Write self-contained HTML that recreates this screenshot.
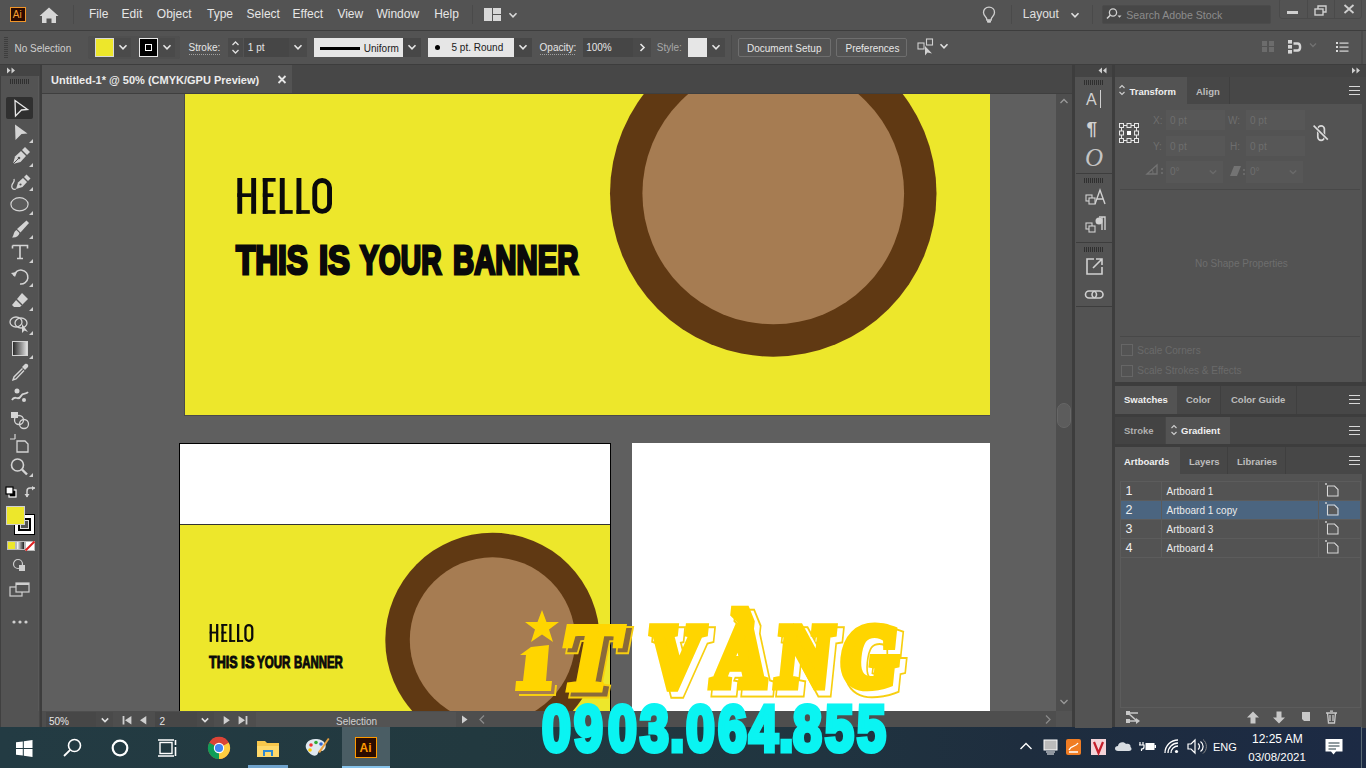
<!DOCTYPE html>
<html><head><meta charset="utf-8">
<style>
*{margin:0;padding:0;box-sizing:border-box}
html,body{width:1366px;height:768px;overflow:hidden;background:#535353;font-family:"Liberation Sans",sans-serif;color:#ddd;position:relative}
.a{position:absolute}
.t{position:absolute;white-space:nowrap;line-height:1}
svg{position:absolute;overflow:visible}
</style></head><body>
<div class="a" style="left:0px;top:0px;width:1366px;height:30px;background:#535353;"></div>
<div class="a" style="left:0px;top:30px;width:1366px;height:1px;background:#3d3d3d;"></div>
<div class="a" style="left:0px;top:31px;width:1366px;height:33px;background:#535353;"></div>
<div class="a" style="left:0px;top:64px;width:1366px;height:1px;background:#3d3d3d;"></div>
<div class="a" style="left:0px;top:65px;width:40px;height:663px;background:#535353;"></div>
<div class="a" style="left:0px;top:65px;width:40px;height:11px;background:#444444;"></div>
<div class="a" style="left:40px;top:65px;width:2px;height:663px;background:#3d3d3d;"></div>
<div class="a" style="left:0px;top:76px;width:1px;height:651px;background:#404040;"></div>
<div class="a" style="left:38px;top:76px;width:1px;height:635px;background:#595959;"></div>
<div class="a" style="left:39px;top:76px;width:1px;height:651px;background:#474747;"></div>
<div class="a" style="left:42px;top:65px;width:1030px;height:29px;background:#474747;"></div>
<div class="a" style="left:42px;top:65px;width:250px;height:28px;background:#535353;"></div>
<div class="a" style="left:42px;top:93px;width:1030px;height:1px;background:#3f3f3f;"></div>
<div class="a" style="left:42px;top:94px;width:1014px;height:617px;background:#5f5f5f;overflow:hidden">
 <div class="a" style="left:142px;top:-10px;width:806px;height:332px;background:#4a4a4a"></div>
 <div class="a" style="left:143px;top:-10px;width:805px;height:331px;background:#ede72b"></div>
 <svg style="left:0;top:0" width="1014" height="617">
  <circle cx="731.25" cy="99.5" r="163.25" fill="#603913"/>
  <circle cx="731.25" cy="99.5" r="130.85" fill="#a67c52"/>
 </svg>
 <div class="a" style="left:137px;top:349px;width:432px;height:300px;background:#000"></div>
 <div class="a" style="left:138px;top:350px;width:430px;height:300px;background:#fff"></div>
 <div class="a" style="left:138px;top:430px;width:430px;height:1px;background:#333"></div>
 <div class="a" style="left:138px;top:431px;width:430px;height:200px;background:#ede72b;overflow:hidden">
  <svg style="left:0;top:0" width="430" height="200">
   <circle cx="312.5" cy="115" r="107.2" fill="#603913"/>
   <circle cx="312.5" cy="115" r="82.7" fill="#a67c52"/>
  </svg>
 </div>
 <div class="a" style="left:590px;top:349px;width:358px;height:300px;background:#fff"></div>
</div>
<svg style="left:0;top:0" width="1366" height="768"><g fill="#0a0a0a"><rect x="237.30" y="178.00" width="4.90" height="35.80"/><rect x="251.20" y="178.00" width="4.90" height="35.80"/><rect x="237.30" y="193.30" width="14.20" height="3.70"/><rect x="262.80" y="178.00" width="4.90" height="35.80"/><rect x="262.80" y="178.00" width="12.80" height="3.70"/><rect x="262.80" y="193.30" width="10.60" height="3.70"/><rect x="262.80" y="210.10" width="12.80" height="3.70"/><rect x="279.80" y="178.00" width="4.90" height="35.80"/><rect x="279.80" y="210.10" width="12.90" height="3.70"/><rect x="296.50" y="178.00" width="4.90" height="35.80"/><rect x="296.50" y="210.10" width="13.30" height="3.70"/></g><rect x="314.75" y="180.45" width="14.80" height="30.90" rx="7.40" fill="none" stroke="#0a0a0a" stroke-width="4.90"/><g fill="#0a0a0a"><rect x="209.64" y="624.00" width="2.26" height="17.90"/><rect x="216.06" y="624.00" width="2.26" height="17.90"/><rect x="209.64" y="631.65" width="6.56" height="1.85"/><rect x="221.42" y="624.00" width="2.26" height="17.90"/><rect x="221.42" y="624.00" width="5.91" height="1.85"/><rect x="221.42" y="631.65" width="4.90" height="1.85"/><rect x="221.42" y="640.05" width="5.91" height="1.85"/><rect x="229.27" y="624.00" width="2.26" height="17.90"/><rect x="229.27" y="640.05" width="5.96" height="1.85"/><rect x="236.99" y="624.00" width="2.26" height="17.90"/><rect x="236.99" y="640.05" width="6.14" height="1.85"/></g><rect x="245.42" y="625.13" width="6.84" height="15.64" rx="3.42" fill="none" stroke="#0a0a0a" stroke-width="2.26"/></svg>
<div class="t" style="left:236.30px;top:239.3px;font-size:41.5px;font-weight:bold;color:#0a0a0a;transform:scaleX(0.76);transform-origin:0 0;-webkit-text-stroke:3px #0a0a0a">THIS</div>
<div class="t" style="left:318.92px;top:239.3px;font-size:41.5px;font-weight:bold;color:#0a0a0a;transform:scaleX(0.79);transform-origin:0 0;-webkit-text-stroke:3px #0a0a0a">IS</div>
<div class="t" style="left:360.08px;top:239.3px;font-size:41.5px;font-weight:bold;color:#0a0a0a;transform:scaleX(0.68);transform-origin:0 0;-webkit-text-stroke:3px #0a0a0a">YOUR</div>
<div class="t" style="left:453.39px;top:239.3px;font-size:41.5px;font-weight:bold;color:#0a0a0a;transform:scaleX(0.706);transform-origin:0 0;-webkit-text-stroke:3px #0a0a0a">BANNER</div>
<div class="t" style="left:209.20px;top:653.6px;font-size:16.5px;font-weight:bold;color:#0a0a0a;transform:scaleX(0.76);transform-origin:0 0;-webkit-text-stroke:1px #0a0a0a">THIS</div>
<div class="t" style="left:240.73px;top:653.6px;font-size:16.5px;font-weight:bold;color:#0a0a0a;transform:scaleX(0.87);transform-origin:0 0;-webkit-text-stroke:1px #0a0a0a">IS</div>
<div class="t" style="left:257.20px;top:653.6px;font-size:16.5px;font-weight:bold;color:#0a0a0a;transform:scaleX(0.7);transform-origin:0 0;-webkit-text-stroke:1px #0a0a0a">YOUR</div>
<div class="t" style="left:294.01px;top:653.6px;font-size:16.5px;font-weight:bold;color:#0a0a0a;transform:scaleX(0.69);transform-origin:0 0;-webkit-text-stroke:1px #0a0a0a">BANNER</div>
<div class="a" style="left:1056px;top:94px;width:16px;height:617px;background:#4e4e4e;"></div>
<div class="a" style="left:1072px;top:65px;width:3px;height:663px;background:#3d3d3d;"></div>
<div class="a" style="left:1075px;top:65px;width:37px;height:12px;background:#444444;"></div>
<div class="a" style="left:1075px;top:77px;width:37px;height:651px;background:#535353;"></div>
<div class="a" style="left:1112px;top:65px;width:3px;height:663px;background:#3d3d3d;"></div>
<div class="a" style="left:1115px;top:65px;width:251px;height:12px;background:#444444;"></div>
<div class="a" style="left:1115px;top:77px;width:251px;height:651px;background:#535353;"></div>
<div class="a" style="left:42px;top:711px;width:1030px;height:17px;background:#535353;"></div>
<div class="a" style="left:0px;top:727px;width:1366px;height:41px;background:#223940;background:linear-gradient(90deg,#233b43 0%,#22393f 35%,#203440 60%,#1e2d3e 75%,#1c2a44 100%)"></div>
<div class="a" style="left:10px;top:7px;width:16px;height:15px;background:#2a0a00;border:1px solid #f0962a"></div>
<div class="t" style="left:12.8px;top:10.04px;font-size:10px;color:#f7a030;font-weight:normal;font-family:'Liberation Sans',sans-serif;">Ai</div>
<svg style="left:38px;top:6px;" width="22" height="18" viewBox="0 0 22 18"><path d="M11 1.5 L20.5 10 L18 10 L18 17 L13.5 17 L13.5 12.5 L8.5 12.5 L8.5 17 L4 17 L4 10 L1.5 10 Z" fill="#d6d6d6"/></svg>
<div class="a" style="left:73px;top:5px;width:1px;height:19px;background:#4a4a4a;"></div>
<div class="t" style="left:89px;top:8.04px;font-size:12px;color:#e6e6e6;font-weight:normal;font-family:'Liberation Sans',sans-serif;">File</div>
<div class="t" style="left:121.6px;top:8.04px;font-size:12px;color:#e6e6e6;font-weight:normal;font-family:'Liberation Sans',sans-serif;">Edit</div>
<div class="t" style="left:156.8px;top:8.04px;font-size:12px;color:#e6e6e6;font-weight:normal;font-family:'Liberation Sans',sans-serif;">Object</div>
<div class="t" style="left:207px;top:8.04px;font-size:12px;color:#e6e6e6;font-weight:normal;font-family:'Liberation Sans',sans-serif;">Type</div>
<div class="t" style="left:246.6px;top:8.04px;font-size:12px;color:#e6e6e6;font-weight:normal;font-family:'Liberation Sans',sans-serif;">Select</div>
<div class="t" style="left:292.6px;top:8.04px;font-size:12px;color:#e6e6e6;font-weight:normal;font-family:'Liberation Sans',sans-serif;">Effect</div>
<div class="t" style="left:337.4px;top:8.04px;font-size:12px;color:#e6e6e6;font-weight:normal;font-family:'Liberation Sans',sans-serif;">View</div>
<div class="t" style="left:376.4px;top:8.04px;font-size:12px;color:#e6e6e6;font-weight:normal;font-family:'Liberation Sans',sans-serif;">Window</div>
<div class="t" style="left:434.2px;top:8.04px;font-size:12px;color:#e6e6e6;font-weight:normal;font-family:'Liberation Sans',sans-serif;">Help</div>
<div class="a" style="left:472px;top:5px;width:1px;height:19px;background:#4a4a4a;"></div>
<svg style="left:484px;top:8px;" width="17" height="13" viewBox="0 0 17 13"><rect x="0" y="0" width="8" height="13" fill="#d8d8d8"/><rect x="9" y="0" width="8" height="6" fill="#d8d8d8"/><rect x="9" y="7" width="8" height="6" fill="#d8d8d8"/></svg>
<svg style="left:505px;top:7px;" width="16" height="16" viewBox="0 0 16 16"><path d="M4.5 6.25 L8 9.75 L11.5 6.25" fill="none" stroke="#d8d8d8" stroke-width="1.6"/></svg>
<svg style="left:982px;top:6px;" width="14" height="18" viewBox="0 0 14 18"><path d="M7 1.2 C3.6 1.2 1.5 3.6 1.5 6.4 C1.5 9 3.5 10.4 4.6 12.4 L4.8 14 L9.2 14 L9.4 12.4 C10.5 10.4 12.5 9 12.5 6.4 C12.5 3.6 10.4 1.2 7 1.2 Z" fill="none" stroke="#d0d0d0" stroke-width="1.3"/><rect x="5" y="14.3" width="4" height="2.5" rx="1" fill="#d0d0d0"/></svg>
<div class="a" style="left:1011px;top:5px;width:1px;height:19px;background:#4a4a4a;"></div>
<div class="t" style="left:1022.8px;top:7.94px;font-size:12px;color:#e0e0e0;font-weight:normal;font-family:'Liberation Sans',sans-serif;">Layout</div>
<svg style="left:1066.5px;top:7px;" width="16" height="16" viewBox="0 0 16 16"><path d="M4.5 6.25 L8 9.75 L11.5 6.25" fill="none" stroke="#e0e0e0" stroke-width="1.6"/></svg>
<div class="a" style="left:1092px;top:5px;width:1px;height:19px;background:#4a4a4a;"></div>
<div class="a" style="left:1102px;top:5px;width:169px;height:19px;background:#474747;border:1px solid #4b4b4b;border-radius:2px"></div>
<svg style="left:1105px;top:7px;" width="18" height="15" viewBox="0 0 18 15"><circle cx="8" cy="5.5" r="3.6" fill="none" stroke="#d0d0d0" stroke-width="1.3"/><path d="M5.5 8 L2 11.6" stroke="#d0d0d0" stroke-width="1.5"/><path d="M12.5 8.5 L16.5 8.5 L14.5 10.7 Z" fill="#d0d0d0"/></svg>
<div class="t" style="left:1126.3px;top:9.83px;font-size:10.6px;color:#8c8c8c;font-weight:normal;font-family:'Liberation Sans',sans-serif;">Search Adobe Stock</div>
<div class="a" style="left:1279px;top:-2px;width:83px;height:21px;background:#535353;border:1px solid #4a4a4a;border-radius:3px"></div>
<div class="a" style="left:1307px;top:0px;width:1px;height:18px;background:#4a4a4a;"></div>
<div class="a" style="left:1334px;top:0px;width:1px;height:18px;background:#4a4a4a;"></div>
<div class="a" style="left:1287px;top:11px;width:11px;height:3px;background:#cfcfcf;"></div>
<svg style="left:1314px;top:5px;" width="14" height="11" viewBox="0 0 14 11"><rect x="1" y="4" width="8" height="6" fill="none" stroke="#cfcfcf" stroke-width="1.4"/><path d="M4 4 L4 1 L12 1 L12 7 L9 7" fill="none" stroke="#cfcfcf" stroke-width="1.4"/></svg>
<svg style="left:1343px;top:4px;" width="12" height="10" viewBox="0 0 12 10"><path d="M1.5 1 L10.5 9 M10.5 1 L1.5 9" stroke="#cfcfcf" stroke-width="1.8"/></svg>
<div class="a" style="left:4px;top:37px;width:4px;height:1px;background:#3e3e3e;"></div>
<div class="a" style="left:4px;top:39px;width:4px;height:1px;background:#3e3e3e;"></div>
<div class="a" style="left:4px;top:41px;width:4px;height:1px;background:#3e3e3e;"></div>
<div class="a" style="left:4px;top:43px;width:4px;height:1px;background:#3e3e3e;"></div>
<div class="a" style="left:4px;top:45px;width:4px;height:1px;background:#3e3e3e;"></div>
<div class="a" style="left:4px;top:47px;width:4px;height:1px;background:#3e3e3e;"></div>
<div class="a" style="left:4px;top:49px;width:4px;height:1px;background:#3e3e3e;"></div>
<div class="a" style="left:4px;top:51px;width:4px;height:1px;background:#3e3e3e;"></div>
<div class="a" style="left:4px;top:53px;width:4px;height:1px;background:#3e3e3e;"></div>
<div class="a" style="left:4px;top:55px;width:4px;height:1px;background:#3e3e3e;"></div>
<div class="a" style="left:4px;top:57px;width:4px;height:1px;background:#3e3e3e;"></div>
<div class="t" style="left:14.5px;top:43.83px;font-size:10px;color:#cfcfcf;font-weight:normal;font-family:'Liberation Sans',sans-serif;">No Selection</div>
<div class="a" style="left:88px;top:36px;width:92px;height:23px;background:#4f4f4f;border-radius:2px"></div>
<div class="a" style="left:95px;top:38px;width:19px;height:19px;background:#ede72b;border:1px solid #d8d8d8;"></div>
<div class="a" style="left:114px;top:38px;width:17px;height:19px;background:#4a4a4a;"></div>
<svg style="left:114.5px;top:39px;" width="16" height="16" viewBox="0 0 16 16"><path d="M4.5 6.25 L8 9.75 L11.5 6.25" fill="none" stroke="#e6e6e6" stroke-width="1.6"/></svg>
<div class="a" style="left:139px;top:38px;width:19px;height:19px;background:#000;border:1px solid #e8e8e8;"></div>
<div class="a" style="left:145px;top:44px;width:7px;height:7px;background:#000;border:1.5px solid #fff;"></div>
<div class="a" style="left:158px;top:38px;width:17px;height:19px;background:#4a4a4a;"></div>
<svg style="left:158.5px;top:39px;" width="16" height="16" viewBox="0 0 16 16"><path d="M4.5 6.25 L8 9.75 L11.5 6.25" fill="none" stroke="#e6e6e6" stroke-width="1.6"/></svg>
<div class="t" style="left:188.6px;top:43.23px;font-size:10px;color:#e6e6e6;font-weight:normal;font-family:'Liberation Sans',sans-serif;">Stroke:</div>
<div class="a" style="left:189px;top:54px;width:31px;height:1px;background:#9a9a9a;background:repeating-linear-gradient(90deg,#a0a0a0 0 1px,transparent 1px 2px)"></div>
<div class="a" style="left:228px;top:38px;width:15px;height:19px;background:#4a4a4a;"></div>
<svg style="left:228px;top:38px;" width="15" height="19" viewBox="0 0 15 19"><path d="M4.5 7 L7.5 4 L10.5 7 M4.5 12 L7.5 15 L10.5 12" fill="none" stroke="#e0e0e0" stroke-width="1.3"/></svg>
<div class="a" style="left:244px;top:38px;width:45px;height:19px;background:#464646;"></div>
<div class="t" style="left:247.8px;top:42.73px;font-size:10px;color:#e6e6e6;font-weight:normal;font-family:'Liberation Sans',sans-serif;">1 pt</div>
<div class="a" style="left:289px;top:38px;width:18px;height:19px;background:#4a4a4a;"></div>
<svg style="left:290px;top:39px;" width="16" height="16" viewBox="0 0 16 16"><path d="M4.5 6.25 L8 9.75 L11.5 6.25" fill="none" stroke="#e6e6e6" stroke-width="1.6"/></svg>
<div class="a" style="left:314px;top:38px;width:89px;height:19px;background:#e6e6e6;"></div>
<div class="a" style="left:320px;top:47px;width:40px;height:3px;background:#000;"></div>
<div class="t" style="left:363.8px;top:44.14px;font-size:10px;color:#1a1a1a;font-weight:normal;font-family:'Liberation Sans',sans-serif;">Uniform</div>
<div class="a" style="left:403px;top:38px;width:18px;height:19px;background:#474747;"></div>
<svg style="left:404px;top:39px;" width="16" height="16" viewBox="0 0 16 16"><path d="M4.5 6.25 L8 9.75 L11.5 6.25" fill="none" stroke="#e6e6e6" stroke-width="1.6"/></svg>
<div class="a" style="left:428px;top:38px;width:86px;height:19px;background:#e6e6e6;"></div>
<div class="a" style="left:434.7px;top:45px;width:5px;height:5px;border-radius:50%;background:#000"></div>
<div class="t" style="left:451.5px;top:43.23px;font-size:10px;color:#1a1a1a;font-weight:normal;font-family:'Liberation Sans',sans-serif;">5 pt. Round</div>
<div class="a" style="left:514px;top:38px;width:18px;height:19px;background:#474747;"></div>
<svg style="left:515px;top:39px;" width="16" height="16" viewBox="0 0 16 16"><path d="M4.5 6.25 L8 9.75 L11.5 6.25" fill="none" stroke="#e6e6e6" stroke-width="1.6"/></svg>
<div class="t" style="left:539.6px;top:43.33px;font-size:10px;color:#e6e6e6;font-weight:normal;font-family:'Liberation Sans',sans-serif;">Opacity:</div>
<div class="a" style="left:540px;top:54px;width:36px;height:1px;background:#9a9a9a;background:repeating-linear-gradient(90deg,#a0a0a0 0 1px,transparent 1px 2px)"></div>
<div class="a" style="left:583px;top:38px;width:50px;height:19px;background:#464646;"></div>
<div class="t" style="left:586.2px;top:43.33px;font-size:10px;color:#e6e6e6;font-weight:normal;font-family:'Liberation Sans',sans-serif;">100%</div>
<div class="a" style="left:633px;top:38px;width:18px;height:19px;background:#4a4a4a;"></div>
<svg style="left:633px;top:38px;" width="18" height="19" viewBox="0 0 18 19"><path d="M7.5 6 L11 9.5 L7.5 13" fill="none" stroke="#e6e6e6" stroke-width="1.6"/></svg>
<div class="t" style="left:656.8px;top:43.33px;font-size:10px;color:#a8a8a8;font-weight:normal;font-family:'Liberation Sans',sans-serif;">Style:</div>
<div class="a" style="left:688px;top:38px;width:19px;height:19px;background:#e6e6e6;"></div>
<div class="a" style="left:707px;top:38px;width:18px;height:19px;background:#4a4a4a;"></div>
<svg style="left:708px;top:39px;" width="16" height="16" viewBox="0 0 16 16"><path d="M4.5 6.25 L8 9.75 L11.5 6.25" fill="none" stroke="#e6e6e6" stroke-width="1.6"/></svg>
<div class="a" style="left:731px;top:35px;width:1px;height:25px;background:#4a4a4a;"></div>
<div class="a" style="left:738px;top:38px;width:93px;height:19px;background:#535353;border:1px solid #6e6e6e;border-radius:2px"></div>
<div class="t" style="left:747px;top:43.53px;font-size:10px;color:#e6e6e6;font-weight:normal;font-family:'Liberation Sans',sans-serif;">Document Setup</div>
<div class="a" style="left:836px;top:38px;width:71px;height:19px;background:#535353;border:1px solid #6e6e6e;border-radius:2px"></div>
<div class="t" style="left:845.5px;top:43.53px;font-size:10px;color:#e6e6e6;font-weight:normal;font-family:'Liberation Sans',sans-serif;">Preferences</div>
<svg style="left:917px;top:38px;" width="18" height="18" viewBox="0 0 18 18"><rect x="1" y="5" width="6" height="6" fill="none" stroke="#d0d0d0" stroke-width="1.1"/><rect x="9.5" y="1" width="6" height="6" fill="none" stroke="#d0d0d0" stroke-width="1.1"/><path d="M8 8 L8 17.5 L10.5 14.5 L15 15.5 Z" fill="#d0d0d0"/></svg>
<svg style="left:935.5px;top:38px;" width="16" height="16" viewBox="0 0 16 16"><path d="M4.5 6.25 L8 9.75 L11.5 6.25" fill="none" stroke="#e0e0e0" stroke-width="1.6"/></svg>
<svg style="left:1261px;top:40px;" width="14" height="13" viewBox="0 0 14 13"><g fill="#6c6c6c"><rect x="1" y="1" width="5" height="5"/><rect x="8" y="1" width="5" height="5"/><rect x="1" y="7" width="5" height="5"/><rect x="8" y="7" width="5" height="5"/></g></svg>
<svg style="left:1287px;top:40px;" width="16" height="14" viewBox="0 0 16 14"><g fill="#d6d6d6"><rect x="1" y="0" width="4" height="3.6"/><rect x="1" y="5" width="4" height="3.6"/><rect x="1" y="10" width="4" height="3.6"/></g><path d="M6.5 3.5 L10.5 3.5 C14 3.5 14 10.5 10.5 10.5 L6.5 10.5" fill="none" stroke="#d6d6d6" stroke-width="2.4"/></svg>
<svg style="left:1305px;top:37px;" width="16" height="16" viewBox="0 0 16 16"><path d="M5 6.5 L8 9.5 L11 6.5" fill="none" stroke="#727272" stroke-width="1.3"/></svg>
<svg style="left:1336px;top:42px;" width="13" height="10" viewBox="0 0 13 10"><g fill="#dcdcdc"><rect x="0" y="0" width="2" height="2"/><rect x="0" y="4" width="2" height="2"/><rect x="0" y="8" width="2" height="2"/><rect x="3.5" y="0.5" width="9" height="1.2"/><rect x="3.5" y="4.5" width="9" height="1.2"/><rect x="3.5" y="8.5" width="9" height="1.2"/></g></svg>
<div class="a" style="left:1361px;top:31px;width:2px;height:33px;background:#4a4a4a;"></div>
<svg style="left:6px;top:66px;" width="10" height="9" viewBox="0 0 10 9"><path d="M1 1.5 L4.5 4.5 L1 7.5 Z M5.5 1.5 L9 4.5 L5.5 7.5 Z" fill="#cfcfcf"/></svg>
<div class="a" style="left:10px;top:79px;width:1px;height:5px;background:#2f2f2f;"></div>
<div class="a" style="left:12px;top:79px;width:1px;height:5px;background:#2f2f2f;"></div>
<div class="a" style="left:14px;top:79px;width:1px;height:5px;background:#2f2f2f;"></div>
<div class="a" style="left:16px;top:79px;width:1px;height:5px;background:#2f2f2f;"></div>
<div class="a" style="left:18px;top:79px;width:1px;height:5px;background:#2f2f2f;"></div>
<div class="a" style="left:20px;top:79px;width:1px;height:5px;background:#2f2f2f;"></div>
<div class="a" style="left:22px;top:79px;width:1px;height:5px;background:#2f2f2f;"></div>
<div class="a" style="left:24px;top:79px;width:1px;height:5px;background:#2f2f2f;"></div>
<div class="a" style="left:26px;top:79px;width:1px;height:5px;background:#2f2f2f;"></div>
<div class="a" style="left:28px;top:79px;width:1px;height:5px;background:#2f2f2f;"></div>
<div class="a" style="left:6px;top:97px;width:27px;height:22px;background:#303030;border-radius:2px"></div>
<svg style="left:13px;top:99px;" width="16" height="19" viewBox="0 0 16 19"><path d="M2 1.5 L14.5 10.5 L8.5 11 L2.5 17 Z" fill="#303030" stroke="#e8e8e8" stroke-width="1.3" stroke-linejoin="miter"/></svg>
<svg style="left:13px;top:123px;" width="16" height="19" viewBox="0 0 16 19"><path d="M2 1.5 L14.5 10.5 L8.5 11 L2.5 17 Z" fill="#d4d4d4"/></svg>
<svg style="left:29px;top:139px;" width="4" height="4" viewBox="0 0 4 4"><path d="M4 0 L4 4 L0 4 Z" fill="#cfcfcf"/></svg>
<svg style="left:11px;top:146px;" width="20" height="20" viewBox="0 0 20 20"><path d="M2 18 L4 10.5 L10 5 L15 10 L9.5 16 Z" fill="#d4d4d4"/><path d="M11 4 L14 1 L19 6 L16 9 Z" fill="#d4d4d4"/><path d="M2 18 L7.5 12.5" stroke="#535353" stroke-width="1"/><circle cx="8" cy="12" r="1.3" fill="#535353"/></svg>
<svg style="left:29px;top:163px;" width="4" height="4" viewBox="0 0 4 4"><path d="M4 0 L4 4 L0 4 Z" fill="#cfcfcf"/></svg>
<svg style="left:9px;top:170px;" width="22" height="22" viewBox="0 0 22 22"><path d="M7 19 L9 12.5 L14 8 L18 12 L13.5 17 Z" fill="#d4d4d4"/><path d="M15 7 L17.5 4.5 L21.5 8.5 L19 11 Z" fill="#d4d4d4"/><path d="M7 19 C4 20 2 18 3 15 C4 12 6 12 5 9" fill="none" stroke="#d4d4d4" stroke-width="1.3"/><circle cx="11.5" cy="14.5" r="1.1" fill="#535353"/></svg>
<svg style="left:29px;top:187px;" width="4" height="4" viewBox="0 0 4 4"><path d="M4 0 L4 4 L0 4 Z" fill="#cfcfcf"/></svg>
<svg style="left:9px;top:196px;" width="22" height="17" viewBox="0 0 22 17"><ellipse cx="10.5" cy="8.3" rx="8.6" ry="6.6" fill="#5c5c5c" stroke="#d4d4d4" stroke-width="1.2"/></svg>
<svg style="left:29px;top:211px;" width="4" height="4" viewBox="0 0 4 4"><path d="M4 0 L4 4 L0 4 Z" fill="#cfcfcf"/></svg>
<svg style="left:10px;top:219px;" width="20" height="20" viewBox="0 0 20 20"><path d="M16.5 1.5 L19 4 L10.5 13.5 L7 10 Z" fill="#d4d4d4"/><path d="M6.5 11 L9.5 14 C9 17 6 19 2 18.5 C4 16.5 3.5 12.5 6.5 11 Z" fill="#d4d4d4"/></svg>
<svg style="left:29px;top:235px;" width="4" height="4" viewBox="0 0 4 4"><path d="M4 0 L4 4 L0 4 Z" fill="#cfcfcf"/></svg>
<svg style="left:11px;top:244px;" width="18" height="16" viewBox="0 0 18 16"><path d="M1.5 1.5 L16.5 1.5 L16.5 4.5 M1.5 1.5 L1.5 4.5 M9 1.5 L9 14.5 M6 14.5 L12 14.5" fill="none" stroke="#d4d4d4" stroke-width="1.6"/></svg>
<svg style="left:29px;top:259px;" width="4" height="4" viewBox="0 0 4 4"><path d="M4 0 L4 4 L0 4 Z" fill="#cfcfcf"/></svg>
<svg style="left:9px;top:267px;" width="22" height="20" viewBox="0 0 22 20"><path d="M5 9 A7 7 0 1 1 11 17" fill="none" stroke="#d4d4d4" stroke-width="1.5" stroke-dasharray="0"/><path d="M2 6 L6 10 L8 5 Z" fill="#d4d4d4"/></svg>
<svg style="left:29px;top:283px;" width="4" height="4" viewBox="0 0 4 4"><path d="M4 0 L4 4 L0 4 Z" fill="#cfcfcf"/></svg>
<svg style="left:10px;top:291px;" width="20" height="18" viewBox="0 0 20 18"><path d="M12 2 L18 8 L10 16 L4 16 L2 14 Z" fill="#d4d4d4"/><path d="M6 8 L12 14" stroke="#535353" stroke-width="1.4"/></svg>
<svg style="left:29px;top:307px;" width="4" height="4" viewBox="0 0 4 4"><path d="M4 0 L4 4 L0 4 Z" fill="#cfcfcf"/></svg>
<svg style="left:9px;top:315px;" width="22" height="18" viewBox="0 0 22 18"><ellipse cx="7" cy="7" rx="6" ry="5" fill="none" stroke="#d4d4d4" stroke-width="1.3"/><ellipse cx="12" cy="8" rx="6" ry="5" fill="none" stroke="#d4d4d4" stroke-width="1.3"/><path d="M13 9 L13 18 L15.5 15.5 L19 17 Z" fill="#d4d4d4"/></svg>
<svg style="left:29px;top:331px;" width="4" height="4" viewBox="0 0 4 4"><path d="M4 0 L4 4 L0 4 Z" fill="#cfcfcf"/></svg>
<div class="a" style="left:12px;top:341px;width:16px;height:15px;border:1px solid #d4d4d4;background:linear-gradient(90deg,#2a2a2a,#e0e0e0)"></div>
<svg style="left:29px;top:355px;" width="4" height="4" viewBox="0 0 4 4"><path d="M4 0 L4 4 L0 4 Z" fill="#cfcfcf"/></svg>
<svg style="left:10px;top:362px;" width="20" height="20" viewBox="0 0 20 20"><path d="M15 2 C17 1 19 3 18 5 L15 8 L12 5 Z" fill="#d4d4d4"/><path d="M12.5 6.5 L4 15 L3 18 L6 17 L14 8.5" fill="none" stroke="#d4d4d4" stroke-width="1.4"/></svg>
<svg style="left:9px;top:386px;" width="22" height="18" viewBox="0 0 22 18"><path d="M3 14 C6 8 9 16 12 10 C14 6 17 9 19 6" fill="none" stroke="#d4d4d4" stroke-width="1.8"/><circle cx="8" cy="5" r="2.5" fill="#d4d4d4"/><circle cx="15" cy="14" r="2" fill="#d4d4d4"/></svg>
<svg style="left:9px;top:410px;" width="22" height="20" viewBox="0 0 22 20"><rect x="2" y="2" width="7" height="6" fill="#d4d4d4"/><circle cx="10" cy="10" r="4.5" fill="none" stroke="#d4d4d4" stroke-width="1.3"/><circle cx="15" cy="14" r="4.5" fill="none" stroke="#d4d4d4" stroke-width="1.3"/></svg>
<svg style="left:9px;top:433px;" width="22" height="20" viewBox="0 0 22 20"><path d="M6 1 L6 6 M1 6 L6 6" stroke="#d4d4d4" stroke-width="1.2"/><path d="M8 8 L16 8 L19 11 L19 19 L8 19 Z" fill="none" stroke="#d4d4d4" stroke-width="1.3"/></svg>
<svg style="left:9px;top:457px;" width="22" height="20" viewBox="0 0 22 20"><circle cx="8.5" cy="8" r="6" fill="none" stroke="#d4d4d4" stroke-width="1.6"/><path d="M13 12.5 L18 17.5" stroke="#d4d4d4" stroke-width="2.4"/></svg>
<svg style="left:29px;top:473px;" width="4" height="4" viewBox="0 0 4 4"><path d="M4 0 L4 4 L0 4 Z" fill="#cfcfcf"/></svg>
<svg style="left:5px;top:486px;" width="12" height="12" viewBox="0 0 12 12"><rect x="4" y="4" width="7" height="7" fill="#000" stroke="#fff" stroke-width="1.2"/><rect x="1" y="1" width="7" height="7" fill="#fff" stroke="#000" stroke-width="1.2"/></svg>
<svg style="left:24px;top:486px;" width="14" height="13" viewBox="0 0 14 13"><path d="M3 11 L3 5 C3 3 4 2 6 2 L11 2" fill="none" stroke="#d4d4d4" stroke-width="1.5"/><path d="M8 0 L11 2 L8 4.5 Z M0.5 8 L3 11.5 L5.5 8 Z" fill="#d4d4d4"/></svg>
<div class="a" style="left:15px;top:515px;width:19px;height:19px;background:#535353;border:3px solid #fff;outline:1px solid #000"></div>
<div class="a" style="left:18px;top:518px;width:13px;height:13px;background:#000;"></div>
<div class="a" style="left:20px;top:520px;width:9px;height:9px;background:#535353;border:1px solid #ddd"></div>
<div class="a" style="left:6px;top:506px;width:19px;height:19px;background:#ede72b;border:1px solid #cfcfcf;"></div>
<div class="a" style="left:7px;top:541px;width:9px;height:9px;background:#ede72b;border:1px solid #bbb"></div>
<div class="a" style="left:16px;top:541px;width:9px;height:9px;background:linear-gradient(90deg,#fff,#222);border:1px solid #bbb"></div>
<svg style="left:25px;top:541px;" width="10" height="10" viewBox="0 0 10 10"><rect x="0.5" y="0.5" width="9" height="9" fill="#fff" stroke="#bbb"/><path d="M0.5 9.5 L9.5 0.5" stroke="#e02020" stroke-width="2"/></svg>
<svg style="left:11px;top:558px;" width="18" height="16" viewBox="0 0 18 16"><circle cx="7" cy="6" r="4.5" fill="none" stroke="#cfcfcf" stroke-width="1.2"/><rect x="8" y="7" width="6" height="6" fill="#cfcfcf"/></svg>
<svg style="left:9px;top:581px;" width="22" height="17" viewBox="0 0 22 17"><rect x="1" y="6" width="12" height="9" fill="none" stroke="#cfcfcf" stroke-width="1.2"/><rect x="7" y="2" width="13" height="9" fill="#535353" stroke="#cfcfcf" stroke-width="1.2"/><rect x="7" y="2" width="13" height="2" fill="#cfcfcf"/></svg>
<svg style="left:10px;top:618px;" width="20" height="8" viewBox="0 0 20 8"><circle cx="4" cy="4" r="1.6" fill="#cfcfcf"/><circle cx="10" cy="4" r="1.6" fill="#cfcfcf"/><circle cx="16" cy="4" r="1.6" fill="#cfcfcf"/></svg>
<div class="t" style="left:51px;top:74.89px;font-size:11px;color:#ececec;font-weight:bold;font-family:'Liberation Sans',sans-serif;">Untitled-1* @ 50% (CMYK/GPU Preview)</div>
<svg style="left:277px;top:75px;" width="10" height="9" viewBox="0 0 10 9"><path d="M1.5 1 L8.5 8 M8.5 1 L1.5 8" stroke="#e6e6e6" stroke-width="1.8"/></svg>
<svg style="left:1056px;top:96px;" width="16" height="10" viewBox="0 0 16 10"><path d="M4.5 7 L8 3.5 L11.5 7" fill="none" stroke="#9a9a9a" stroke-width="1.3"/></svg>
<div class="a" style="left:1057px;top:403px;width:14px;height:25px;border-radius:7px;background:#5c5c5c;border:1px solid #666"></div>
<svg style="left:1056px;top:697px;" width="16" height="10" viewBox="0 0 16 10"><path d="M4.5 3 L8 6.5 L11.5 3" fill="none" stroke="#9a9a9a" stroke-width="1.3"/></svg>
<svg style="left:1098px;top:66px;" width="10" height="9" viewBox="0 0 10 9"><path d="M4 1.5 L0.5 4.5 L4 7.5 Z M8.5 1.5 L5 4.5 L8.5 7.5 Z" fill="#cfcfcf"/></svg>
<div class="a" style="left:1084px;top:80px;width:1px;height:5px;background:#2f2f2f;"></div>
<div class="a" style="left:1086px;top:80px;width:1px;height:5px;background:#2f2f2f;"></div>
<div class="a" style="left:1088px;top:80px;width:1px;height:5px;background:#2f2f2f;"></div>
<div class="a" style="left:1090px;top:80px;width:1px;height:5px;background:#2f2f2f;"></div>
<div class="a" style="left:1092px;top:80px;width:1px;height:5px;background:#2f2f2f;"></div>
<div class="a" style="left:1094px;top:80px;width:1px;height:5px;background:#2f2f2f;"></div>
<div class="a" style="left:1096px;top:80px;width:1px;height:5px;background:#2f2f2f;"></div>
<div class="a" style="left:1098px;top:80px;width:1px;height:5px;background:#2f2f2f;"></div>
<div class="a" style="left:1100px;top:80px;width:1px;height:5px;background:#2f2f2f;"></div>
<div class="a" style="left:1102px;top:80px;width:1px;height:5px;background:#2f2f2f;"></div>
<div class="t" style="left:1086px;top:92.46px;font-size:16px;color:#d0d0d0;font-weight:normal;font-family:'Liberation Sans',sans-serif;">A</div>
<div class="a" style="left:1100px;top:90px;width:1px;height:18px;background:#d0d0d0;"></div>
<div class="t" style="left:1086.5px;top:119.42px;font-size:19px;color:#d0d0d0;font-weight:bold;font-family:'Liberation Sans',sans-serif;">&#182;</div>
<div class="t" style="left:1085px;top:144.84px;font-size:25px;color:#c4c4c4;font-weight:normal;font-family:'Liberation Serif',serif;"><i>O</i></div>
<div class="a" style="left:1076px;top:173px;width:36px;height:1px;background:#3d3d3d;"></div>
<div class="a" style="left:1084px;top:178px;width:1px;height:5px;background:#2f2f2f;"></div>
<div class="a" style="left:1086px;top:178px;width:1px;height:5px;background:#2f2f2f;"></div>
<div class="a" style="left:1088px;top:178px;width:1px;height:5px;background:#2f2f2f;"></div>
<div class="a" style="left:1090px;top:178px;width:1px;height:5px;background:#2f2f2f;"></div>
<div class="a" style="left:1092px;top:178px;width:1px;height:5px;background:#2f2f2f;"></div>
<div class="a" style="left:1094px;top:178px;width:1px;height:5px;background:#2f2f2f;"></div>
<div class="a" style="left:1096px;top:178px;width:1px;height:5px;background:#2f2f2f;"></div>
<div class="a" style="left:1098px;top:178px;width:1px;height:5px;background:#2f2f2f;"></div>
<div class="a" style="left:1100px;top:178px;width:1px;height:5px;background:#2f2f2f;"></div>
<div class="a" style="left:1102px;top:178px;width:1px;height:5px;background:#2f2f2f;"></div>
<svg style="left:1085px;top:187px;" width="22" height="20" viewBox="0 0 22 20"><path d="M10 17 L15 3 L20 17 M12 12 L18 12" fill="none" stroke="#d0d0d0" stroke-width="1.4"/><rect x="1" y="8" width="6" height="6" fill="none" stroke="#d0d0d0" stroke-width="1.1"/><rect x="4" y="11" width="6" height="6" fill="#535353" stroke="#d0d0d0" stroke-width="1.1"/></svg>
<svg style="left:1085px;top:215px;" width="22" height="20" viewBox="0 0 22 20"><path d="M14 2 L20 2 L20 15 M17 2 L17 15" fill="none" stroke="#d0d0d0" stroke-width="1.4"/><circle cx="14" cy="6" r="3.5" fill="#d0d0d0"/><rect x="1" y="8" width="6" height="6" fill="none" stroke="#d0d0d0" stroke-width="1.1"/><rect x="4" y="11" width="6" height="6" fill="#535353" stroke="#d0d0d0" stroke-width="1.1"/></svg>
<div class="a" style="left:1076px;top:242px;width:36px;height:1px;background:#3d3d3d;"></div>
<div class="a" style="left:1084px;top:247px;width:1px;height:5px;background:#2f2f2f;"></div>
<div class="a" style="left:1086px;top:247px;width:1px;height:5px;background:#2f2f2f;"></div>
<div class="a" style="left:1088px;top:247px;width:1px;height:5px;background:#2f2f2f;"></div>
<div class="a" style="left:1090px;top:247px;width:1px;height:5px;background:#2f2f2f;"></div>
<div class="a" style="left:1092px;top:247px;width:1px;height:5px;background:#2f2f2f;"></div>
<div class="a" style="left:1094px;top:247px;width:1px;height:5px;background:#2f2f2f;"></div>
<div class="a" style="left:1096px;top:247px;width:1px;height:5px;background:#2f2f2f;"></div>
<div class="a" style="left:1098px;top:247px;width:1px;height:5px;background:#2f2f2f;"></div>
<div class="a" style="left:1100px;top:247px;width:1px;height:5px;background:#2f2f2f;"></div>
<div class="a" style="left:1102px;top:247px;width:1px;height:5px;background:#2f2f2f;"></div>
<svg style="left:1085px;top:256px;" width="20" height="20" viewBox="0 0 20 20"><path d="M9 3 L2 3 L2 18 L17 18 L17 11" fill="none" stroke="#d0d0d0" stroke-width="1.6"/><path d="M8 12 L17 3 M11 3 L17 3 L17 9" fill="none" stroke="#d0d0d0" stroke-width="1.6"/></svg>
<svg style="left:1084px;top:288px;" width="22" height="14" viewBox="0 0 22 14"><rect x="1.5" y="3" width="11" height="7" rx="3.5" fill="none" stroke="#d0d0d0" stroke-width="1.6"/><rect x="8" y="3" width="11" height="7" rx="3.5" fill="none" stroke="#d0d0d0" stroke-width="1.6"/></svg>
<div class="a" style="left:1076px;top:306px;width:36px;height:1px;background:#3d3d3d;"></div>
<div class="a" style="left:1075px;top:307px;width:37px;height:421px;background:#535353;"></div>
<svg style="left:1351px;top:66px;" width="10" height="9" viewBox="0 0 10 9"><path d="M1 1.5 L4.5 4.5 L1 7.5 Z M5.5 1.5 L9 4.5 L5.5 7.5 Z" fill="#cfcfcf"/></svg>
<div class="a" style="left:1115px;top:77px;width:247px;height:27px;background:#474747;"></div>
<div class="a" style="left:1115px;top:77px;width:72px;height:27px;background:#535353;"></div>
<div class="a" style="left:1229px;top:77px;width:1px;height:27px;background:#3f3f3f;"></div>
<svg style="left:1118px;top:83px;" width="8" height="14" viewBox="0 0 8 14"><path d="M1.5 5 L4 2.5 L6.5 5 M1.5 9 L4 11.5 L6.5 9" fill="none" stroke="#cfcfcf" stroke-width="1.1"/></svg>
<div class="t" style="left:1129.5px;top:86.66px;font-size:9.5px;color:#f0f0f0;font-weight:bold;font-family:'Liberation Sans',sans-serif;">Transform</div>
<div class="t" style="left:1196px;top:86.66px;font-size:9.5px;color:#bdbdbd;font-weight:bold;font-family:'Liberation Sans',sans-serif;">Align</div>
<div class="a" style="left:1349px;top:86px;width:11px;height:1.2px;background:#d8d8d8;"></div>
<div class="a" style="left:1349px;top:90px;width:11px;height:1.2px;background:#d8d8d8;"></div>
<div class="a" style="left:1349px;top:94px;width:11px;height:1.2px;background:#d8d8d8;"></div>
<div class="a" style="left:1362px;top:77px;width:4px;height:651px;background:#474747;"></div>
<svg style="left:1119px;top:123px;" width="21" height="21" viewBox="0 0 21 21"><g fill="none" stroke="#e6e6e6" stroke-width="1"><rect x="0.5" y="0.5" width="4" height="4"/><rect x="8" y="0.5" width="4" height="4"/><rect x="15.5" y="0.5" width="4" height="4"/><rect x="0.5" y="8" width="4" height="4"/><rect x="15.5" y="8" width="4" height="4"/><rect x="0.5" y="15.5" width="4" height="4"/><rect x="8" y="15.5" width="4" height="4"/><rect x="15.5" y="15.5" width="4" height="4"/><path d="M4.5 2.5 L8 2.5 M12 2.5 L15.5 2.5 M4.5 17.5 L8 17.5 M12 17.5 L15.5 17.5 M2.5 4.5 L2.5 8 M2.5 12 L2.5 15.5 M17.5 4.5 L17.5 8 M17.5 12 L17.5 15.5"/></g><rect x="8" y="8" width="4" height="4" fill="#fff"/></svg>
<div class="a" style="left:1166px;top:110px;width:59px;height:20px;background:#575757;"></div>
<div class="t" style="left:1153px;top:116.03px;font-size:10px;color:#6e6e6e;font-weight:normal;font-family:'Liberation Sans',sans-serif;">X:</div>
<div class="t" style="left:1170px;top:116.33px;font-size:10px;color:#6e6e6e;font-weight:normal;font-family:'Liberation Sans',sans-serif;">0 pt</div>
<div class="a" style="left:1246px;top:110px;width:59px;height:20px;background:#575757;"></div>
<div class="t" style="left:1228px;top:116.03px;font-size:10px;color:#6e6e6e;font-weight:normal;font-family:'Liberation Sans',sans-serif;">W:</div>
<div class="t" style="left:1250px;top:116.33px;font-size:10px;color:#6e6e6e;font-weight:normal;font-family:'Liberation Sans',sans-serif;">0 pt</div>
<div class="a" style="left:1166px;top:136px;width:59px;height:20px;background:#575757;"></div>
<div class="t" style="left:1153px;top:142.03px;font-size:10px;color:#6e6e6e;font-weight:normal;font-family:'Liberation Sans',sans-serif;">Y:</div>
<div class="t" style="left:1170px;top:142.34px;font-size:10px;color:#6e6e6e;font-weight:normal;font-family:'Liberation Sans',sans-serif;">0 pt</div>
<div class="a" style="left:1246px;top:136px;width:59px;height:20px;background:#575757;"></div>
<div class="t" style="left:1230px;top:142.03px;font-size:10px;color:#6e6e6e;font-weight:normal;font-family:'Liberation Sans',sans-serif;">H:</div>
<div class="t" style="left:1250px;top:142.34px;font-size:10px;color:#6e6e6e;font-weight:normal;font-family:'Liberation Sans',sans-serif;">0 pt</div>
<div class="a" style="left:1166px;top:161px;width:57px;height:22px;background:#575757;"></div>
<div class="t" style="left:1170px;top:167.34px;font-size:10px;color:#6e6e6e;font-weight:normal;font-family:'Liberation Sans',sans-serif;">0&#176;</div>
<svg style="left:1205px;top:164px;" width="16" height="16" viewBox="0 0 16 16"><path d="M4.8 6.4 L8 9.6 L11.2 6.4" fill="none" stroke="#6a6a6a" stroke-width="1.4"/></svg>
<div class="a" style="left:1246px;top:161px;width:57px;height:22px;background:#575757;"></div>
<div class="t" style="left:1250px;top:167.34px;font-size:10px;color:#6e6e6e;font-weight:normal;font-family:'Liberation Sans',sans-serif;">0&#176;</div>
<svg style="left:1285px;top:164px;" width="16" height="16" viewBox="0 0 16 16"><path d="M4.8 6.4 L8 9.6 L11.2 6.4" fill="none" stroke="#6a6a6a" stroke-width="1.4"/></svg>
<svg style="left:1146px;top:162px;" width="18" height="14" viewBox="0 0 18 14"><path d="M1 12 L11 3 L11 12 Z" fill="none" stroke="#737373" stroke-width="1.3"/><path d="M7 12 A5 5 0 0 0 5 7" fill="none" stroke="#737373" stroke-width="1"/><circle cx="16" cy="7" r="0.9" fill="#737373"/><circle cx="16" cy="11" r="0.9" fill="#737373"/></svg>
<svg style="left:1229px;top:165px;" width="18" height="12" viewBox="0 0 18 12"><path d="M1 11 L5 1 L12 1 L8 11 Z" fill="#737373"/><circle cx="15" cy="5" r="0.9" fill="#737373"/><circle cx="15" cy="9" r="0.9" fill="#737373"/></svg>
<svg style="left:1310px;top:120px;" width="22" height="24" viewBox="0 0 22 24"><rect x="7.8" y="5.8" width="6.6" height="14.6" rx="3.3" fill="none" stroke="#d8d8d8" stroke-width="1.7"/><path d="M3.6 5.6 L17.8 19.6" stroke="#535353" stroke-width="3.2"/><path d="M3.6 5.6 L17.8 19.6" stroke="#dcdcdc" stroke-width="1.6"/></svg>
<div class="a" style="left:1120px;top:189px;width:240px;height:1px;background:#484848;"></div>
<div class="t" style="left:1195px;top:258.84px;font-size:10px;color:#6e6e6e;font-weight:normal;font-family:'Liberation Sans',sans-serif;">No Shape Properties</div>
<div class="a" style="left:1120px;top:336px;width:240px;height:1px;background:#484848;"></div>
<div class="a" style="left:1121px;top:344px;width:12px;height:12px;background:#535353;border:1px solid #666;"></div>
<div class="t" style="left:1137.3px;top:345.54px;font-size:10px;color:#6a6a6a;font-weight:normal;font-family:'Liberation Sans',sans-serif;">Scale Corners</div>
<div class="a" style="left:1121px;top:365px;width:12px;height:12px;background:#535353;border:1px solid #666;"></div>
<div class="t" style="left:1137.3px;top:366.04px;font-size:10px;color:#6a6a6a;font-weight:normal;font-family:'Liberation Sans',sans-serif;">Scale Strokes &amp; Effects</div>
<div class="a" style="left:1115px;top:382px;width:251px;height:4px;background:#3d3d3d;"></div>
<div class="a" style="left:1115px;top:386px;width:247px;height:28px;background:#474747;"></div>
<div class="a" style="left:1115px;top:386px;width:62px;height:28px;background:#535353;"></div>
<div class="a" style="left:1220px;top:386px;width:1px;height:28px;background:#3f3f3f;"></div>
<div class="a" style="left:1296px;top:386px;width:1px;height:28px;background:#3f3f3f;"></div>
<div class="t" style="left:1124px;top:395.46px;font-size:9.5px;color:#f0f0f0;font-weight:bold;font-family:'Liberation Sans',sans-serif;">Swatches</div>
<div class="t" style="left:1186px;top:395.46px;font-size:9.5px;color:#bdbdbd;font-weight:bold;font-family:'Liberation Sans',sans-serif;">Color</div>
<div class="t" style="left:1231px;top:395.46px;font-size:9.5px;color:#bdbdbd;font-weight:bold;font-family:'Liberation Sans',sans-serif;">Color Guide</div>
<div class="a" style="left:1349px;top:395px;width:11px;height:1.2px;background:#d8d8d8;"></div>
<div class="a" style="left:1349px;top:399px;width:11px;height:1.2px;background:#d8d8d8;"></div>
<div class="a" style="left:1349px;top:403px;width:11px;height:1.2px;background:#d8d8d8;"></div>
<div class="a" style="left:1115px;top:414px;width:251px;height:3px;background:#3d3d3d;"></div>
<div class="a" style="left:1115px;top:417px;width:247px;height:27px;background:#474747;"></div>
<div class="a" style="left:1115px;top:417px;width:50px;height:27px;background:#434343;"></div>
<div class="a" style="left:1166px;top:417px;width:64px;height:27px;background:#535353;"></div>
<div class="t" style="left:1124px;top:426.46px;font-size:9.5px;color:#b0b0b0;font-weight:bold;font-family:'Liberation Sans',sans-serif;">Stroke</div>
<svg style="left:1170px;top:423px;" width="8" height="14" viewBox="0 0 8 14"><path d="M1.5 5 L4 2.5 L6.5 5 M1.5 9 L4 11.5 L6.5 9" fill="none" stroke="#cfcfcf" stroke-width="1.1"/></svg>
<div class="t" style="left:1181px;top:426.46px;font-size:9.5px;color:#f0f0f0;font-weight:bold;font-family:'Liberation Sans',sans-serif;">Gradient</div>
<div class="a" style="left:1349px;top:426px;width:11px;height:1.2px;background:#d8d8d8;"></div>
<div class="a" style="left:1349px;top:430px;width:11px;height:1.2px;background:#d8d8d8;"></div>
<div class="a" style="left:1349px;top:434px;width:11px;height:1.2px;background:#d8d8d8;"></div>
<div class="a" style="left:1115px;top:444px;width:251px;height:3px;background:#3d3d3d;"></div>
<div class="a" style="left:1115px;top:447px;width:247px;height:27px;background:#474747;"></div>
<div class="a" style="left:1115px;top:447px;width:65px;height:27px;background:#535353;"></div>
<div class="a" style="left:1227px;top:447px;width:1px;height:27px;background:#3f3f3f;"></div>
<div class="a" style="left:1285px;top:447px;width:1px;height:27px;background:#3f3f3f;"></div>
<div class="t" style="left:1124px;top:456.96px;font-size:9.5px;color:#f0f0f0;font-weight:bold;font-family:'Liberation Sans',sans-serif;">Artboards</div>
<div class="t" style="left:1189px;top:456.96px;font-size:9.5px;color:#bdbdbd;font-weight:bold;font-family:'Liberation Sans',sans-serif;">Layers</div>
<div class="t" style="left:1237px;top:456.96px;font-size:9.5px;color:#bdbdbd;font-weight:bold;font-family:'Liberation Sans',sans-serif;">Libraries</div>
<div class="a" style="left:1349px;top:456px;width:11px;height:1.2px;background:#d8d8d8;"></div>
<div class="a" style="left:1349px;top:460px;width:11px;height:1.2px;background:#d8d8d8;"></div>
<div class="a" style="left:1349px;top:464px;width:11px;height:1.2px;background:#d8d8d8;"></div>
<div class="a" style="left:1120px;top:481px;width:241px;height:227px;background:#535353;border:1px solid #5c5c5c;"></div>
<div class="a" style="left:1121px;top:500px;width:239px;height:1px;background:#5c5c5c;"></div>
<div class="t" style="left:1125.5px;top:484.72px;font-size:12.5px;color:#f0f0f0;font-weight:normal;font-family:'Liberation Sans',sans-serif;">1</div>
<div class="t" style="left:1166.6px;top:486.54px;font-size:10px;color:#ececec;font-weight:normal;font-family:'Liberation Sans',sans-serif;">Artboard 1</div>
<svg style="left:1325px;top:483px;" width="16" height="14" viewBox="0 0 16 14"><path d="M0 1 L2 1 M1 0 L1 2" stroke="#d0d0d0" stroke-width="0.9"/><path d="M2.5 3 L9.5 3 L13 6.5 L13 13 L2.5 13 Z" fill="none" stroke="#d8d8d8" stroke-width="1.1"/><path d="M3.5 4 L9 4 L12 7 L12 12 L3.5 12 Z" fill="#5a5a5a"/></svg>
<div class="a" style="left:1121px;top:501px;width:239px;height:18px;background:#4b6580;"></div>
<div class="a" style="left:1121px;top:519px;width:239px;height:1px;background:#5c5c5c;"></div>
<div class="t" style="left:1125.5px;top:503.72px;font-size:12.5px;color:#f0f0f0;font-weight:normal;font-family:'Liberation Sans',sans-serif;">2</div>
<div class="t" style="left:1166.6px;top:505.54px;font-size:10px;color:#ececec;font-weight:normal;font-family:'Liberation Sans',sans-serif;">Artboard 1 copy</div>
<svg style="left:1325px;top:502px;" width="16" height="14" viewBox="0 0 16 14"><path d="M0 1 L2 1 M1 0 L1 2" stroke="#d0d0d0" stroke-width="0.9"/><path d="M2.5 3 L9.5 3 L13 6.5 L13 13 L2.5 13 Z" fill="none" stroke="#d8d8d8" stroke-width="1.1"/><path d="M3.5 4 L9 4 L12 7 L12 12 L3.5 12 Z" fill="#5a5a5a"/></svg>
<div class="a" style="left:1121px;top:538px;width:239px;height:1px;background:#5c5c5c;"></div>
<div class="t" style="left:1125.5px;top:522.72px;font-size:12.5px;color:#f0f0f0;font-weight:normal;font-family:'Liberation Sans',sans-serif;">3</div>
<div class="t" style="left:1166.6px;top:524.53px;font-size:10px;color:#ececec;font-weight:normal;font-family:'Liberation Sans',sans-serif;">Artboard 3</div>
<svg style="left:1325px;top:521px;" width="16" height="14" viewBox="0 0 16 14"><path d="M0 1 L2 1 M1 0 L1 2" stroke="#d0d0d0" stroke-width="0.9"/><path d="M2.5 3 L9.5 3 L13 6.5 L13 13 L2.5 13 Z" fill="none" stroke="#d8d8d8" stroke-width="1.1"/><path d="M3.5 4 L9 4 L12 7 L12 12 L3.5 12 Z" fill="#5a5a5a"/></svg>
<div class="a" style="left:1121px;top:557px;width:239px;height:1px;background:#5c5c5c;"></div>
<div class="t" style="left:1125.5px;top:541.72px;font-size:12.5px;color:#f0f0f0;font-weight:normal;font-family:'Liberation Sans',sans-serif;">4</div>
<div class="t" style="left:1166.6px;top:543.53px;font-size:10px;color:#ececec;font-weight:normal;font-family:'Liberation Sans',sans-serif;">Artboard 4</div>
<svg style="left:1325px;top:540px;" width="16" height="14" viewBox="0 0 16 14"><path d="M0 1 L2 1 M1 0 L1 2" stroke="#d0d0d0" stroke-width="0.9"/><path d="M2.5 3 L9.5 3 L13 6.5 L13 13 L2.5 13 Z" fill="none" stroke="#d8d8d8" stroke-width="1.1"/><path d="M3.5 4 L9 4 L12 7 L12 12 L3.5 12 Z" fill="#5a5a5a"/></svg>
<div class="a" style="left:1161px;top:481px;width:1px;height:76px;background:#5c5c5c;"></div>
<div class="a" style="left:1318px;top:481px;width:1px;height:76px;background:#5c5c5c;"></div>
<svg style="left:1125px;top:710px;" width="16" height="14" viewBox="0 0 16 14"><path d="M2 3 L13 3 M2 11 L13 11 M3 3 L12 11" stroke="#c8c8c8" stroke-width="1.6"/><path d="M11 8 L15 11 L11 14 Z" fill="#c8c8c8"/><rect x="1" y="1" width="4" height="4" fill="#c8c8c8"/><rect x="1" y="9" width="4" height="4" fill="#c8c8c8"/></svg>
<svg style="left:1246px;top:711px;" width="14" height="13" viewBox="0 0 14 13"><path d="M7 0.5 L13 6.5 L9.5 6.5 L9.5 12.5 L4.5 12.5 L4.5 6.5 L1 6.5 Z" fill="#c8c8c8"/></svg>
<svg style="left:1272px;top:711px;" width="14" height="13" viewBox="0 0 14 13"><path d="M7 12.5 L13 6.5 L9.5 6.5 L9.5 0.5 L4.5 0.5 L4.5 6.5 L1 6.5 Z" fill="#c8c8c8"/></svg>
<svg style="left:1299px;top:711px;" width="12" height="12" viewBox="0 0 12 12"><path d="M3 1 L11 1 L11 10 L3 10 Z" fill="#c8c8c8"/><path d="M1 6 L5 10 L1 10 Z" fill="#535353"/></svg>
<svg style="left:1325px;top:710px;" width="13" height="14" viewBox="0 0 13 14"><path d="M1 3 L12 3 M5 1.2 L8 1.2 M2.5 3 L3.5 13 L9.5 13 L10.5 3 M5 5 L5 11 M8 5 L8 11" fill="none" stroke="#c8c8c8" stroke-width="1.3"/></svg>
<div class="a" style="left:42px;top:711px;width:1030px;height:16px;background:#4e4e4e;"></div>
<div class="a" style="left:46px;top:712px;width:50px;height:15px;background:#474747;"></div>
<div class="t" style="left:49px;top:716.83px;font-size:10px;color:#e6e6e6;font-weight:normal;font-family:'Liberation Sans',sans-serif;">50%</div>
<div class="a" style="left:96px;top:712px;width:17px;height:15px;background:#4a4a4a;"></div>
<svg style="left:96.5px;top:712px;" width="16" height="16" viewBox="0 0 16 16"><path d="M4.8 6.4 L8 9.6 L11.2 6.4" fill="none" stroke="#e0e0e0" stroke-width="1.5"/></svg>
<div class="a" style="left:114px;top:712px;width:41px;height:15px;background:#4e4e4e;"></div>
<svg style="left:120px;top:713px;" width="30" height="13" viewBox="0 0 30 13"><rect x="2.6" y="3" width="1.8" height="8.5" fill="#cfcfcf"/><path d="M11.4 3 L5 7.25 L11.4 11.5 Z M26.3 3 L20 7.25 L26.3 11.5 Z" fill="#cfcfcf"/></svg>
<div class="a" style="left:155px;top:712px;width:42px;height:15px;background:#474747;"></div>
<div class="t" style="left:159.5px;top:716.83px;font-size:10px;color:#e6e6e6;font-weight:normal;font-family:'Liberation Sans',sans-serif;">2</div>
<div class="a" style="left:197px;top:712px;width:17px;height:15px;background:#4a4a4a;"></div>
<svg style="left:197px;top:712px;" width="16" height="16" viewBox="0 0 16 16"><path d="M4.8 6.4 L8 9.6 L11.2 6.4" fill="none" stroke="#e0e0e0" stroke-width="1.5"/></svg>
<svg style="left:218px;top:713px;" width="36" height="13" viewBox="0 0 36 13"><path d="M5.7 3 L11.8 7.25 L5.7 11.5 Z M20.6 3 L27 7.25 L20.6 11.5 Z" fill="#cfcfcf"/><rect x="27.6" y="3" width="1.8" height="8.5" fill="#cfcfcf"/></svg>
<div class="a" style="left:256px;top:712px;width:200px;height:15px;background:#535353;"></div>
<div class="t" style="left:336px;top:716.83px;font-size:10px;color:#d0d0d0;font-weight:normal;font-family:'Liberation Sans',sans-serif;">Selection</div>
<svg style="left:459px;top:713px;" width="12" height="13" viewBox="0 0 12 13"><path d="M3 2.5 L8.5 6.5 L3 10.5 Z" fill="#cfcfcf"/></svg>
<div class="a" style="left:472px;top:712px;width:584px;height:15px;background:#4e4e4e;"></div>
<svg style="left:476px;top:713px;" width="12" height="13" viewBox="0 0 12 13"><path d="M8 2.5 L4 6.5 L8 10.5" fill="none" stroke="#8a8a8a" stroke-width="1.3"/></svg>
<svg style="left:1042px;top:713px;" width="12" height="13" viewBox="0 0 12 13"><path d="M4 2.5 L8 6.5 L4 10.5" fill="none" stroke="#8a8a8a" stroke-width="1.3"/></svg>
<div class="a" style="left:1056px;top:711px;width:16px;height:16px;background:#535353;"></div>
<svg style="left:16px;top:740px;" width="17" height="17" viewBox="0 0 17 17"><path d="M0 2.3 L6.8 1.4 L6.8 8 L0 8 Z M7.8 1.2 L16.5 0 L16.5 8 L7.8 8 Z M0 9 L6.8 9 L6.8 15.6 L0 14.7 Z M7.8 9 L16.5 9 L16.5 17 L7.8 15.8 Z" fill="#fff"/></svg>
<svg style="left:62px;top:737px;" width="22" height="22" viewBox="0 0 22 22"><circle cx="12.5" cy="8.5" r="6" fill="none" stroke="#fff" stroke-width="1.6"/><path d="M8.2 12.8 L2 19" stroke="#fff" stroke-width="1.8"/></svg>
<svg style="left:110px;top:738px;" width="20" height="20" viewBox="0 0 20 20"><circle cx="10" cy="10" r="7.3" fill="none" stroke="#fff" stroke-width="2.2"/></svg>
<svg style="left:158px;top:738px;" width="20" height="20" viewBox="0 0 20 20"><rect x="2" y="4.5" width="12" height="11" fill="none" stroke="#fff" stroke-width="1.4"/><path d="M0 2 L16 2 M0 18 L16 18" stroke="#fff" stroke-width="1.4"/><path d="M17.5 2 L17.5 7 M17.5 9 L17.5 18" stroke="#fff" stroke-width="1.6"/></svg>
<svg style="left:207px;top:736px;" width="24" height="24" viewBox="0 0 24 24"><circle cx="12" cy="12" r="11" fill="#db4437"/><path d="M12 12 L2.4 6.5 A11 11 0 0 0 12 23 Z" fill="#0f9d58"/><path d="M12 12 L12 23 A11 11 0 0 0 21.6 6.5 Z" fill="#ffcd40"/><path d="M12 12 L21.6 6.5 A11 11 0 0 0 2.4 6.5 Z" fill="#db4437"/><circle cx="12" cy="12" r="5.2" fill="#fff"/><circle cx="12" cy="12" r="4.1" fill="#4285f4"/></svg>
<svg style="left:256px;top:738px;" width="24" height="20" viewBox="0 0 24 20"><path d="M1 3 L9 3 L11 5 L23 5 L23 19 L1 19 Z" fill="#f8c74c"/><rect x="1" y="8" width="22" height="11" fill="#ffd96a"/><rect x="7" y="12" width="10" height="6" fill="#2f8ad1"/><rect x="9" y="14" width="6" height="4" fill="#ffd96a"/></svg>
<div class="a" style="left:248px;top:765px;width:40px;height:3px;background:#6fa3cc;"></div>
<svg style="left:303px;top:736px;" width="27" height="24" viewBox="0 0 27 24"><path d="M4 14 C0 8 6 2 14 3 C22 4 25 10 21 14 C19 16 16 14 15 17 C14 21 8 21 4 14 Z" fill="#dfe8ef"/><circle cx="8" cy="9" r="1.8" fill="#e33"/><circle cx="13" cy="6.5" r="1.8" fill="#3a3"/><circle cx="18" cy="8" r="1.8" fill="#36c"/><circle cx="7" cy="14" r="1.8" fill="#fc0"/><path d="M15 16 L25 2 L26.5 3 L17 17 Z" fill="#e8a040"/></svg>
<div class="a" style="left:342px;top:727px;width:48px;height:41px;background:#4a5d64;"></div>
<div class="a" style="left:342px;top:766px;width:48px;height:2px;background:#86c2ea;"></div>
<div class="a" style="left:355px;top:737px;width:22px;height:21px;background:#2b0c00;border:1.3px solid #ff9a00"></div>
<div class="t" style="left:359.5px;top:742.34px;font-size:12px;color:#ff9a00;font-weight:bold;font-family:'Liberation Sans',sans-serif;">Ai</div>
<svg style="left:1019px;top:741px;" width="14" height="10" viewBox="0 0 14 10"><path d="M1.5 8 L7 2.5 L12.5 8" fill="none" stroke="#fff" stroke-width="1.4"/></svg>
<svg style="left:1043px;top:739px;" width="16" height="16" viewBox="0 0 16 16"><rect x="1" y="1" width="13" height="10" fill="#bbb" stroke="#fff" stroke-width="1"/><path d="M3 13 L12 13 M4 15 L11 15" stroke="#fff" stroke-width="1"/></svg>
<svg style="left:1065px;top:738px;" width="17" height="18" viewBox="0 0 17 18"><rect x="1" y="1" width="15" height="16" rx="2" fill="#f07d24"/><path d="M4 12 C7 6 10 10 13 5 M4 14 L13 14" stroke="#fff" stroke-width="1.4" fill="none"/></svg>
<svg style="left:1090px;top:738px;" width="17" height="18" viewBox="0 0 17 18"><rect x="1" y="1" width="15" height="16" fill="#f4d4d8"/><path d="M4 4 L8.5 15 L13 4" fill="none" stroke="#c41e2a" stroke-width="2.2"/></svg>
<svg style="left:1114px;top:739px;" width="18" height="14" viewBox="0 0 18 14"><path d="M4 12 C0 12 0 7 4 7 C4 3 10 2 12 5 C15 4 17 6 16.5 8 C18 9 18 12 15 12 Z" fill="#d8dde2"/></svg>
<svg style="left:1138px;top:739px;" width="18" height="14" viewBox="0 0 18 14"><path d="M2 3 L2 6 M5 3 L5 6 M1 6 L6 6 L6 8 C6 10 3.5 10 3.5 10 L3.5 12" fill="none" stroke="#fff" stroke-width="1.2"/><rect x="7.5" y="4" width="9" height="7" fill="#fff"/><rect x="16.5" y="6" width="1.5" height="3" fill="#fff"/></svg>
<svg style="left:1163px;top:738px;" width="18" height="17" viewBox="0 0 18 17"><path d="M2 15 A13 13 0 0 1 15 2 M5 15 A10 10 0 0 1 15 5 M8 15 A7 7 0 0 1 15 8" fill="none" stroke="#fff" stroke-width="1.3"/><circle cx="13.5" cy="13.5" r="1.6" fill="#fff"/></svg>
<svg style="left:1187px;top:738px;" width="20" height="17" viewBox="0 0 20 17"><path d="M1 6 L4 6 L8 2 L8 15 L4 11 L1 11 Z" fill="none" stroke="#fff" stroke-width="1.2"/><path d="M11 5.5 C13 7 13 10 11 11.5 M13.5 3.5 C17 6 17 11 13.5 13.5" fill="none" stroke="#fff" stroke-width="1.2"/><path d="M16 1.5 C20.5 5 20.5 12 16 15.5" fill="none" stroke="#888" stroke-width="1"/></svg>
<div class="t" style="left:1213px;top:742.49px;font-size:11px;color:#fff;font-weight:normal;font-family:'Liberation Sans',sans-serif;">ENG</div>
<div class="t" style="left:1252px;top:733.34px;font-size:12px;color:#fff;font-weight:normal;font-family:'Liberation Sans',sans-serif;">12:25 AM</div>
<div class="t" style="left:1248.3px;top:751.57px;font-size:11.5px;color:#fff;font-weight:normal;font-family:'Liberation Sans',sans-serif;">03/08/2021</div>
<svg style="left:1324px;top:737px;" width="20" height="20" viewBox="0 0 20 20"><path d="M1.5 2 L18.5 2 L18.5 14.5 L12 14.5 L9.5 17.5 L7 14.5 L1.5 14.5 Z" fill="#fff"/><path d="M4.5 6 L15.5 6 M4.5 9 L15.5 9 M4.5 12 L12 12" stroke="#223940" stroke-width="1.2"/></svg>
<div class="a" style="left:1361px;top:727px;width:1px;height:41px;background:#5a6a74;"></div>
<div class="t" style="left:650.5px;top:617.5px;font-size:86px;font-weight:bold;font-family:'Liberation Serif',serif;color:#f7cf10;-webkit-text-stroke:15px #f7cf10;transform:scaleX(0.84) skewX(-7deg);transform-origin:0 80px">V</div>
<div class="t" style="left:715.5px;top:617.5px;font-size:86px;font-weight:bold;font-family:'Liberation Serif',serif;color:#f7cf10;-webkit-text-stroke:15px #f7cf10;transform:scaleX(0.84) skewX(-7deg);transform-origin:0 80px">&#192;</div>
<div class="t" style="left:779.5px;top:617.5px;font-size:86px;font-weight:bold;font-family:'Liberation Serif',serif;color:#f7cf10;-webkit-text-stroke:15px #f7cf10;transform:scaleX(0.84) skewX(-7deg);transform-origin:0 80px">N</div>
<div class="t" style="left:842.5px;top:617.5px;font-size:86px;font-weight:bold;font-family:'Liberation Serif',serif;color:#f7cf10;-webkit-text-stroke:15px #f7cf10;transform:scaleX(0.84) skewX(-7deg);transform-origin:0 80px">G</div>
<div class="t" style="left:650.5px;top:617.5px;font-size:86px;font-weight:bold;font-family:'Liberation Serif',serif;color:#ffffff;-webkit-text-stroke:11px #ffffff;transform:scaleX(0.84) skewX(-7deg);transform-origin:0 80px">V</div>
<div class="t" style="left:715.5px;top:617.5px;font-size:86px;font-weight:bold;font-family:'Liberation Serif',serif;color:#ffffff;-webkit-text-stroke:11px #ffffff;transform:scaleX(0.84) skewX(-7deg);transform-origin:0 80px">&#192;</div>
<div class="t" style="left:779.5px;top:617.5px;font-size:86px;font-weight:bold;font-family:'Liberation Serif',serif;color:#ffffff;-webkit-text-stroke:11px #ffffff;transform:scaleX(0.84) skewX(-7deg);transform-origin:0 80px">N</div>
<div class="t" style="left:842.5px;top:617.5px;font-size:86px;font-weight:bold;font-family:'Liberation Serif',serif;color:#ffffff;-webkit-text-stroke:11px #ffffff;transform:scaleX(0.84) skewX(-7deg);transform-origin:0 80px">G</div>
<div class="t" style="left:646px;top:613px;font-size:86px;font-weight:bold;font-family:'Liberation Serif',serif;color:#ffd500;-webkit-text-stroke:11px #ffd500;transform:scaleX(0.84) skewX(-7deg);transform-origin:0 80px">V</div>
<div class="t" style="left:711px;top:613px;font-size:86px;font-weight:bold;font-family:'Liberation Serif',serif;color:#ffd500;-webkit-text-stroke:11px #ffd500;transform:scaleX(0.84) skewX(-7deg);transform-origin:0 80px">&#192;</div>
<div class="t" style="left:775px;top:613px;font-size:86px;font-weight:bold;font-family:'Liberation Serif',serif;color:#ffd500;-webkit-text-stroke:11px #ffd500;transform:scaleX(0.84) skewX(-7deg);transform-origin:0 80px">N</div>
<div class="t" style="left:838px;top:613px;font-size:86px;font-weight:bold;font-family:'Liberation Serif',serif;color:#ffd500;-webkit-text-stroke:11px #ffd500;transform:scaleX(0.84) skewX(-7deg);transform-origin:0 80px">G</div>
<div class="t" style="left:560.5px;top:614.0px;font-size:94px;font-weight:bold;font-family:'Liberation Serif',serif;color:#f7cf10;-webkit-text-stroke:11px #f7cf10;transform:scaleX(0.9) skewX(-12deg);transform-origin:0 80px">T</div>
<div class="t" style="left:560.5px;top:614.0px;font-size:94px;font-weight:bold;font-family:'Liberation Serif',serif;color:#8a6a3a;-webkit-text-stroke:7px #8a6a3a;transform:scaleX(0.9) skewX(-12deg);transform-origin:0 80px">T</div>
<div class="t" style="left:556px;top:609.5px;font-size:94px;font-weight:bold;font-family:'Liberation Serif',serif;color:#ffd500;-webkit-text-stroke:7px #ffd500;transform:scaleX(0.9) skewX(-12deg);transform-origin:0 80px">T</div>
<svg style="left:510px;top:606px;" width="56" height="90" viewBox="0 0 56 90"><path d="M9 89 L45 89 L46 79" fill="none" stroke="#f7cf10" stroke-width="2"/><path d="M32 4 L36.5 16 L49 16 L39 23.5 L43 36 L32 28.5 L21 36 L25 23.5 L15 16 L27.5 16 Z" fill="#ffd500"/><path d="M21 41 L39 39 L36 75 L42 75 L41 85 L5 85 L6 75 L13 75 L16 49 L10 49 Z" fill="#ffd500"/></svg>
<div class="t" style="left:541.8px;top:697.3px;font-size:64px;font-weight:bold;color:#0af4f2;-webkit-text-stroke:5px #0af4f2;transform:scaleX(0.81);transform-origin:0 0">0</div>
<div class="t" style="left:574.4px;top:697.3px;font-size:64px;font-weight:bold;color:#0af4f2;-webkit-text-stroke:5px #0af4f2;transform:scaleX(0.81);transform-origin:0 0">9</div>
<div class="t" style="left:608.0px;top:697.3px;font-size:64px;font-weight:bold;color:#0af4f2;-webkit-text-stroke:5px #0af4f2;transform:scaleX(0.81);transform-origin:0 0">0</div>
<div class="t" style="left:640.2px;top:697.3px;font-size:64px;font-weight:bold;color:#0af4f2;-webkit-text-stroke:5px #0af4f2;transform:scaleX(0.81);transform-origin:0 0">3</div>
<div class="t" style="left:669.6px;top:697.3px;font-size:64px;font-weight:bold;color:#0af4f2;-webkit-text-stroke:5px #0af4f2;transform:scaleX(0.81);transform-origin:0 0">.</div>
<div class="t" style="left:685.7px;top:697.3px;font-size:64px;font-weight:bold;color:#0af4f2;-webkit-text-stroke:5px #0af4f2;transform:scaleX(0.81);transform-origin:0 0">0</div>
<div class="t" style="left:717.5px;top:697.3px;font-size:64px;font-weight:bold;color:#0af4f2;-webkit-text-stroke:5px #0af4f2;transform:scaleX(0.81);transform-origin:0 0">6</div>
<div class="t" style="left:749.0px;top:697.3px;font-size:64px;font-weight:bold;color:#0af4f2;-webkit-text-stroke:5px #0af4f2;transform:scaleX(0.81);transform-origin:0 0">4</div>
<div class="t" style="left:778.9px;top:697.3px;font-size:64px;font-weight:bold;color:#0af4f2;-webkit-text-stroke:5px #0af4f2;transform:scaleX(0.81);transform-origin:0 0">.</div>
<div class="t" style="left:792.9px;top:697.3px;font-size:64px;font-weight:bold;color:#0af4f2;-webkit-text-stroke:5px #0af4f2;transform:scaleX(0.81);transform-origin:0 0">8</div>
<div class="t" style="left:825.1px;top:697.3px;font-size:64px;font-weight:bold;color:#0af4f2;-webkit-text-stroke:5px #0af4f2;transform:scaleX(0.81);transform-origin:0 0">5</div>
<div class="t" style="left:856.6px;top:697.3px;font-size:64px;font-weight:bold;color:#0af4f2;-webkit-text-stroke:5px #0af4f2;transform:scaleX(0.81);transform-origin:0 0">5</div>
</body></html>
